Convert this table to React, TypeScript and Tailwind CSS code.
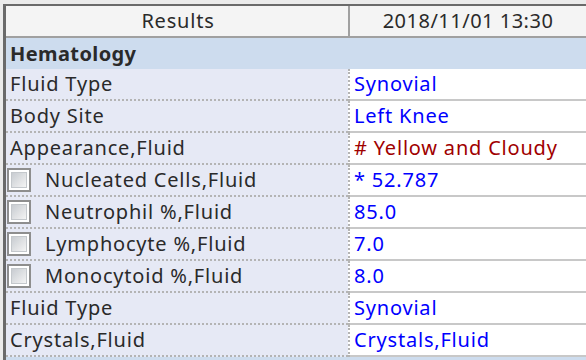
const rows: { label: string; value: string; check?: boolean; tone?: 'blue' | 'red' }[] = [
  { label: 'Fluid Type', value: 'Synovial' },
  { label: 'Body Site', value: 'Left Knee' },
  { label: 'Appearance,Fluid', value: '# Yellow and Cloudy', tone: 'red' },
  { label: 'Nucleated Cells,Fluid', value: '* 52.787', check: true },
  { label: 'Neutrophil %,Fluid', value: '85.0', check: true },
  { label: 'Lymphocyte %,Fluid', value: '7.0', check: true },
  { label: 'Monocytoid %,Fluid', value: '8.0', check: true },
  { label: 'Fluid Type', value: 'Synovial' },
  { label: 'Crystals,Fluid', value: 'Crystals,Fluid' },
];

function CheckBox() {
  return (
    <div className="w-[24px] h-[24px] border-2 border-[#8e8e8e] bg-white p-[2px] shrink-0">
      <div className="w-full h-full border border-[#c4c8cc] bg-gradient-to-br from-[#c8ccd1] to-[#f4f4f4]" />
    </div>
  );
}

export default function App() {
  return (
    <div
      className="w-[586px] h-[360px] overflow-hidden bg-[#ebebeb] pt-[4px] pl-[3px] text-[20px] tracking-[0.8px] text-[#2a2a2a]"
      style={{ fontFamily: '"Noto Sans", "Segoe UI", sans-serif' }}
    >
      <div className="h-full border-l-[3px] border-t-2 border-[#6a6a6a] bg-[#cddcee] flex flex-col">
        {/* header */}
        <div className="flex h-[32px] bg-[#f4f4f4] border-b-2 border-[#a0a0a0] shrink-0">
          <div className="w-[342px] flex items-center justify-center leading-none pl-[2px]">Results</div>
          <div className="w-[2px] bg-[#a0a0a0]" />
          <div className="flex-1 flex items-center justify-center leading-none tracking-[0.5px]">2018/11/01 13:30</div>
        </div>
        <div className="h-[31px] flex items-center pl-[4px] font-bold leading-none tracking-[0.4px] shrink-0">Hematology</div>
        {rows.map((r, i) => (
          <div key={i} className="flex h-[32px] shrink-0">
            <div className="w-[342px] bg-[#e6e9f5] border-b-2 border-dotted border-[#b4b4b4] flex items-center pl-[1px] gap-[14px] leading-none">
              {r.check ? <CheckBox /> : null}
              <span className={r.check ? '' : 'pl-[3px]'}>{r.label}</span>
            </div>
            <div className="w-[2px] border-l-2 border-dotted border-[#b4b4b4] bg-white" />
            <div
              className={`flex-1 bg-white border-b-2 border-[#c8c8c8] flex items-center pl-[4px] leading-none ${
                r.tone === 'red' ? 'text-[#a00000]' : 'text-[#0000ff]'
              }`}
            >
              {r.value}
            </div>
          </div>
        ))}
      </div>
    </div>
  );
}
